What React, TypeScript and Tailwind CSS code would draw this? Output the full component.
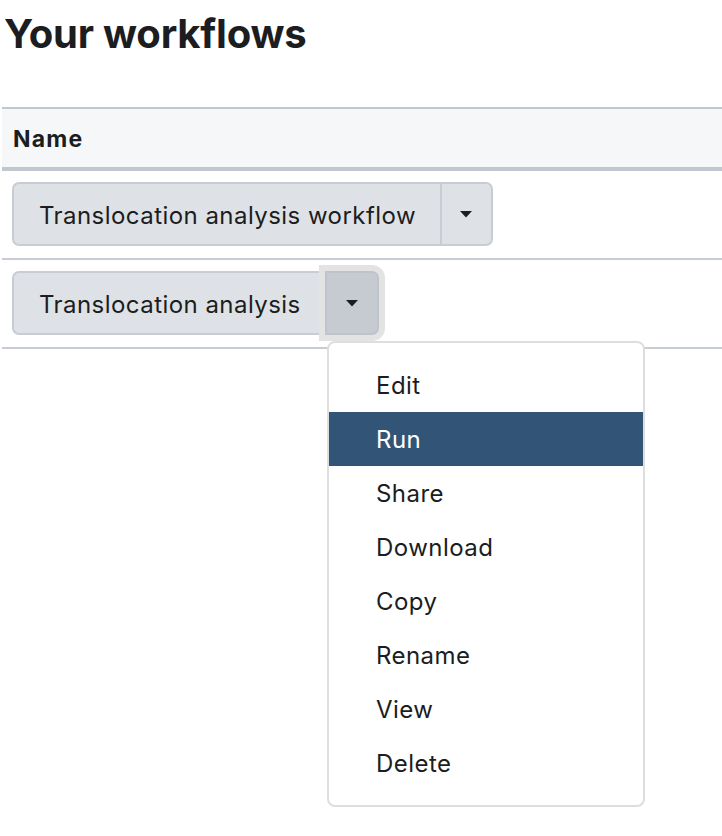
const items = ['Edit', 'Run', 'Share', 'Download', 'Copy', 'Rename', 'View', 'Delete'];

function Caret() {
  return (
    <svg width="14" height="8" viewBox="0 0 14 8">
      <path d="M1 1h12L7 7.5z" fill="#1b1d21" />
    </svg>
  );
}

function SplitButton({ label, open }: { label: string; open?: boolean }) {
  return (
    <div className="relative inline-flex h-[64px]">
      <div className="flex items-center h-full pl-[25px] pr-[24px] pt-[3px] bg-[#dee2e6] border-2 border-r-0 border-[#c8cdd3] rounded-l-[7px] text-[24px] tracking-[0.45px] text-[#1b1d21]">
        {label}
      </div>
      <div
        className={
          open
            ? 'flex items-center justify-center w-[54px] h-full bg-[#c6cbd2] border-2 border-[#bfc4cb] rounded-r-[7px] shadow-[0_0_0_6px_#e3e3e3]'
            : 'flex items-center justify-center w-[53px] h-full bg-[#dee2e6] border-2 border-[#c8cdd3] rounded-r-[7px]'
        }
      >
        <Caret />
      </div>
      {open && (
        <div className="absolute left-[315px] top-[70px] z-10 w-[318px] bg-white border-2 border-[#dedede] rounded-[8px] py-[15px]">
          {items.map((it) => (
            <div
              key={it}
              className={
                it === 'Run'
                  ? 'h-[54px] flex items-center pl-[47px] pt-[2px] text-[24px] tracking-[0.45px] bg-[#325477] text-white'
                  : 'h-[54px] flex items-center pl-[47px] pt-[2px] text-[24px] tracking-[0.45px] text-[#1b1d21]'
              }
            >
              {it}
            </div>
          ))}
        </div>
      )}
    </div>
  );
}

export default function App() {
  return (
    <div className="w-[722px] h-[836px] bg-white pl-[2px] font-['Inter','Liberation_Sans',sans-serif] text-[#1b1d21]">
      <h1 className="text-[40px] font-bold leading-none pt-[14px] pl-[2px] h-[107px] tracking-[-0.2px]">Your workflows</h1>
      <div className="w-full">
        <div className="h-[64px] bg-[#f6f7f9] border-t-2 border-b-4 border-[#c1c7cf] flex items-center pl-[11px] pt-[3px] text-[23px] tracking-[1.2px] font-bold">
          Name
        </div>
        <div className="h-[89px] border-b-2 border-[#c8cdd3] pl-[10px] pt-[11px]">
          <SplitButton label="Translocation analysis workflow" />
        </div>
        <div className="h-[89px] border-b-2 border-[#c8cdd3] pl-[10px] pt-[11px]">
          <SplitButton label="Translocation analysis" open />
        </div>
      </div>
    </div>
  );
}
